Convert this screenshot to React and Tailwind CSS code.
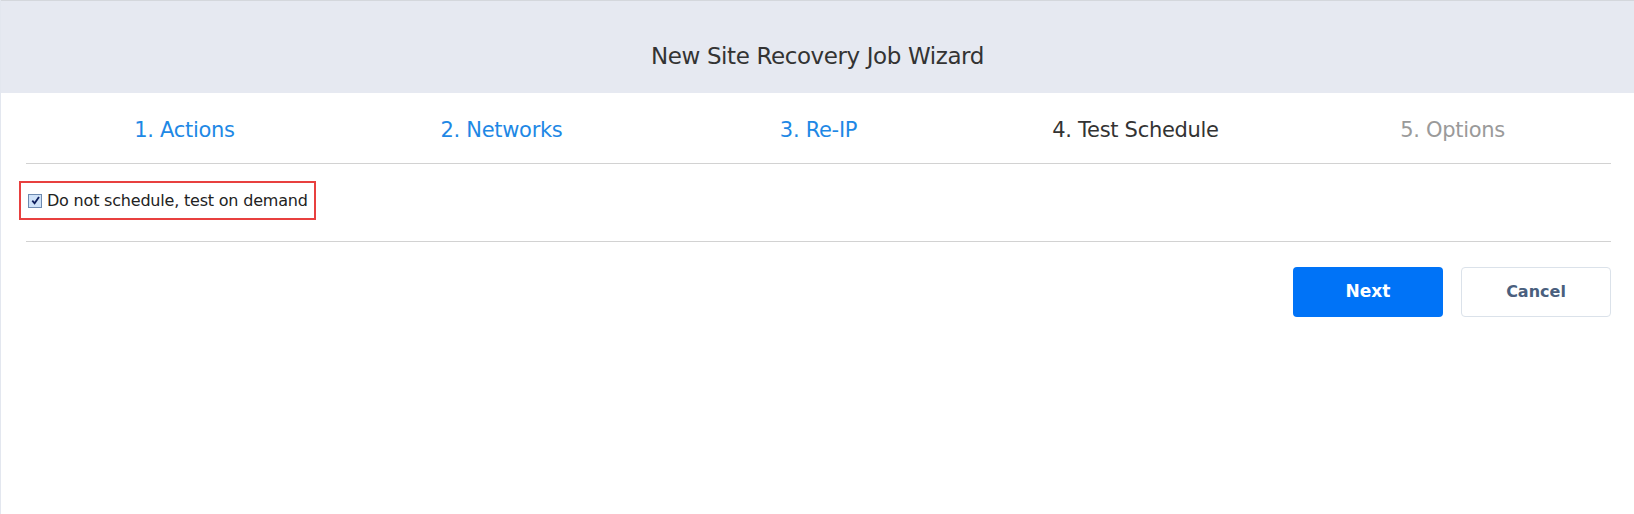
const steps = [
  { label: "1. Actions", state: "done" },
  { label: "2. Networks", state: "done" },
  { label: "3. Re-IP", state: "done" },
  { label: "4. Test Schedule", state: "current" },
  { label: "5. Options", state: "next" },
];

const stepColor = {
  done: "text-[#1e88e5]",
  current: "text-[#333333]",
  next: "text-[#9a9a9a]",
};

export default function App() {
  return (
    <div
      className="h-[514px] w-[1634px] overflow-hidden border-l border-[#e3e7ef] bg-white"
      style={{ fontFamily: '"DejaVu Sans", Verdana, sans-serif' }}
    >
      <header className="flex h-[93px] items-center justify-center border-t border-[#d4d7dc] bg-[#e6e9f1] pt-[18px]">
        <h1 className="text-[23px] tracking-[-0.4px] text-[#333333]">New Site Recovery Job Wizard</h1>
      </header>

      <div className="ml-[25px] mr-[23px]">
        <nav className="grid h-[71px] grid-cols-5 items-center border-b border-[#d2d2d2]">
          {steps.map((s) => (
            <div key={s.label} className={`pt-[6px] text-center text-[21px] tracking-[-0.3px] ${stepColor[s.state]}`}>
              {s.label}
            </div>
          ))}
        </nav>

        <div className="flex h-[78px] items-start border-b border-[#d2d2d2] pt-[17px]">
          <label className="-ml-[7px] flex h-[39px] items-center gap-[5px] border-2 border-[#e8403f] pl-[7px] pr-[6px]">
            <span className="flex h-[14px] w-[14px] items-center justify-center border border-[#6d8ab0] bg-[#cfe2f8]">
              <svg viewBox="0 0 12 12" className="h-[11px] w-[11px]">
                <path d="M2.5 6.2 L5 9 L9.8 2.2" fill="none" stroke="#0d1d5c" strokeWidth="2" />
              </svg>
            </span>
            <span className="text-[16px] tracking-[-0.2px] text-[#222222]">Do not schedule, test on demand</span>
          </label>
        </div>

        <div className="mt-[25px] flex justify-end gap-[18px]">
          <button className="h-[50px] w-[150px] rounded-[4px] bg-[#0073f7] text-[17px] font-bold text-white">
            Next
          </button>
          <button className="h-[50px] w-[150px] rounded-[4px] border border-[#dbe2ea] bg-white text-[16px] font-bold text-[#4a5f7e]">
            Cancel
          </button>
        </div>
      </div>
    </div>
  );
}
